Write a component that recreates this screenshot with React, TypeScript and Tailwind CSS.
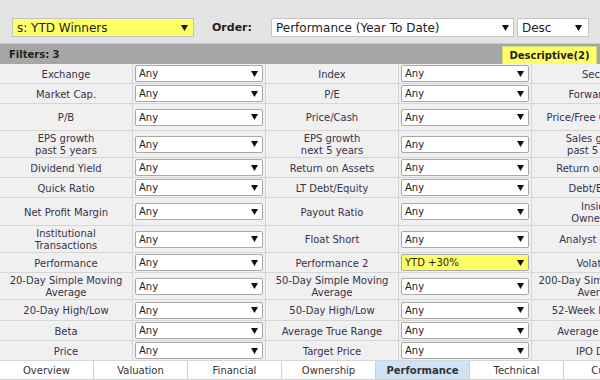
import React from "react";

type Cell = [string, string];

const rows: { h: string; cells: Cell[] }[] = [
    { h: "h-[20px]", cells: [["Exchange", "Any"], ["Index", "Any"], ["Sector", "Any"]] },
    { h: "h-[20px]", cells: [["Market Cap.", "Any"], ["P/E", "Any"], ["Forward P/E", "Any"]] },
    { h: "h-[27px]", cells: [["P/B", "Any"], ["Price/Cash", "Any"], ["Price/Free Cash Flow", "Any"]] },
    { h: "h-[27px]", cells: [["EPS growth\npast 5 years", "Any"], ["EPS growth\nnext 5 years", "Any"], ["Sales growth\npast 5 years", "Any"]] },
    { h: "h-[20px]", cells: [["Dividend Yield", "Any"], ["Return on Assets", "Any"], ["Return on Equity", "Any"]] },
    { h: "h-[20px]", cells: [["Quick Ratio", "Any"], ["LT Debt/Equity", "Any"], ["Debt/Equity", "Any"]] },
    { h: "h-[28px]", cells: [["Net Profit Margin", "Any"], ["Payout Ratio", "Any"], ["Insider\nOwnership", "Any"]] },
    { h: "h-[27px]", cells: [["Institutional\nTransactions", "Any"], ["Float Short", "Any"], ["Analyst Recom.", "Any"]] },
    { h: "h-[20px]", cells: [["Performance", "Any"], ["Performance 2", "YTD +30%"], ["Volatility", "Any"]] },
    { h: "h-[27px]", cells: [["20-Day Simple Moving\nAverage", "Any"], ["50-Day Simple Moving\nAverage", "Any"], ["200-Day Simple Moving\nAverage", "Any"]] },
    { h: "h-[21px]", cells: [["20-Day High/Low", "Any"], ["50-Day High/Low", "Any"], ["52-Week High/Low", "Any"]] },
    { h: "h-[20px]", cells: [["Beta", "Any"], ["Average True Range", "Any"], ["Average Volume", "Any"]] },
    { h: "h-[20px]", cells: [["Price", "Any"], ["Target Price", "Any"], ["IPO Date", "Any"]] },
];

const tabs = ["Overview", "Valuation", "Financial", "Ownership", "Performance", "Technical", "Custom"];

function Arrow() {
    return (
        <svg width="7" height="6" viewBox="0 0 7 6" className="shrink-0">
            <polygon points="0,0 7,0 3.5,6" fill="#111" />
        </svg>
    );
}

function Select({ value, className }: { value: string; className: string }) {
    const active = value !== "Any";
    return (
        <div
            className={`flex items-center justify-between border border-[#a9a9a9] rounded-[2px] pl-[3px] pr-[4px] text-[#222] ${active ? "bg-[#ffff66]" : "bg-white"} ${className}`}
        >
            <span className="truncate">{value}</span>
            <Arrow />
        </div>
    );
}

export default function App() {
    return (
        <div className="w-[600px] h-[380px] overflow-hidden bg-[#f0f0f0] font-['DejaVu_Sans',sans-serif]">
            <div className="h-[43px] bg-[#e4e4e4] flex items-start pt-[18px] pl-[12px]">
                <div className="w-[182px] h-[19px] flex items-center justify-between bg-[#ffff66] border border-[#c4c4c4] pl-[4px] pr-[5px] text-[12px] text-[#222]">
                    <span>s: YTD Winners</span>
                    <Arrow />
                </div>
                <span className="ml-[18px] mr-[19px] text-[11px] font-bold text-[#222] leading-[19px]">Order:</span>
                <div className="w-[243px] h-[19px] flex items-center justify-between bg-white border border-[#c4c4c4] pl-[4px] pr-[4px] text-[12px] text-[#222]">
                    <span>Performance (Year To Date)</span>
                    <Arrow />
                </div>
                <div className="ml-[3px] w-[72px] h-[19px] flex items-center justify-between bg-white border border-[#c4c4c4] pl-[4px] pr-[6px] text-[12px] text-[#222]">
                    <span>Desc</span>
                    <Arrow />
                </div>
            </div>

            <div className="h-[21px] bg-[#a6a6a6] border-t border-[#c9c9c9] flex items-end justify-between pl-[9px] pr-[3px]">
                <span className="self-center text-[10px] font-bold text-[#222]">Filters: 3</span>
                <div className="w-[95px] h-[18px] bg-[#ffff66] border border-b-0 border-[#d6d67a] flex items-center justify-center text-[10px] font-bold text-[#222]">
                    Descriptive(2)
                </div>
            </div>

            <div className="w-[800px]">
                {rows.map((row, i) => (
                    <div key={i} className={`flex ${row.h}`}>
                        {row.cells.map(([label, value], j) => (
                            <React.Fragment key={j}>
                                <div className="w-[133px] shrink-0 border-r border-b border-[#d6d6d6] flex items-center justify-center pt-[2px] text-center whitespace-pre-line leading-[12px] text-[10px] text-[#38324a]">
                                    {label}
                                </div>
                                <div className="w-[133px] shrink-0 border-r border-b border-[#d6d6d6] flex items-center px-[2px] text-[10px]">
                                    <Select value={value} className="w-full h-[17px]" />
                                </div>
                            </React.Fragment>
                        ))}
                    </div>
                ))}
            </div>

            <div className="flex w-[800px] h-[19px]">
                {tabs.map((t) => (
                    <div
                        key={t}
                        className={`w-[94px] shrink-0 border-r border-b border-[#d0d0d0] flex items-center justify-center pt-[1px] text-[10px] text-[#333] ${t === "Performance" ? "bg-[#cfe3f5] font-bold" : "bg-white"}`}
                    >
                        {t}
                    </div>
                ))}
            </div>
        </div>
    );
}
